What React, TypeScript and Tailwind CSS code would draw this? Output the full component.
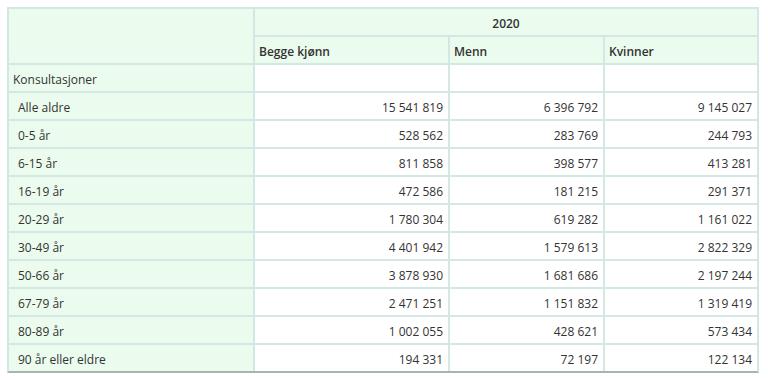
import React from "react";

// konsultasjoner per aldersgruppe, 2020
const rows: [string, string, string, string][] = [
  ["Alle aldre", "15 541 819", "6 396 792", "9 145 027"],
  ["0-5 år", "528 562", "283 769", "244 793"],
  ["6-15 år", "811 858", "398 577", "413 281"],
  ["16-19 år", "472 586", "181 215", "291 371"],
  ["20-29 år", "1 780 304", "619 282", "1 161 022"],
  ["30-49 år", "4 401 942", "1 579 613", "2 822 329"],
  ["50-66 år", "3 878 930", "1 681 686", "2 197 244"],
  ["67-79 år", "2 471 251", "1 151 832", "1 319 419"],
  ["80-89 år", "1 002 055", "428 621", "573 434"],
  ["90 år eller eldre", "194 331", "72 197", "122 134"],
];

const App: React.FC = () => {
  const head = "bg-[#ebfcee] flex items-center pt-[3px]";
  const num = "bg-white flex items-center justify-end pr-[5px] pt-[3px]";

  return (
    <div
      className="w-[768px] h-[381px] bg-white text-[12px] text-[#333] pt-[7px] pl-[7px]"
      style={{ fontFamily: '"Open Sans", "Liberation Sans", sans-serif' }}
    >
      <div className="grid grid-cols-[244px_193px_153px_152px] auto-rows-[26px] gap-[2px] w-fit bg-[#d3e8e4] border-2 border-[#d3e8e4] border-b-[#a9b3b1]">
        <div className={`${head} row-span-2`}></div>
        <div className={`${head} col-span-3 justify-center font-semibold`}>2020</div>
        <div className={`${head} pl-[4px] font-semibold`}>Begge kjønn</div>
        <div className={`${head} pl-[4px] font-semibold`}>Menn</div>
        <div className={`${head} pl-[4px] font-semibold`}>Kvinner</div>

        <div className={`${head} pl-[4px]`}>Konsultasjoner</div>
        <div className="bg-white"></div>
        <div className="bg-white"></div>
        <div className="bg-white"></div>

        {rows.map((r) => (
          <React.Fragment key={r[0]}>
            <div className={`${head} pl-[9px]`}>{r[0]}</div>
            <div className={num}>{r[1]}</div>
            <div className={num}>{r[2]}</div>
            <div className={num}>{r[3]}</div>
          </React.Fragment>
        ))}
      </div>
    </div>
  );
};

export default App;
